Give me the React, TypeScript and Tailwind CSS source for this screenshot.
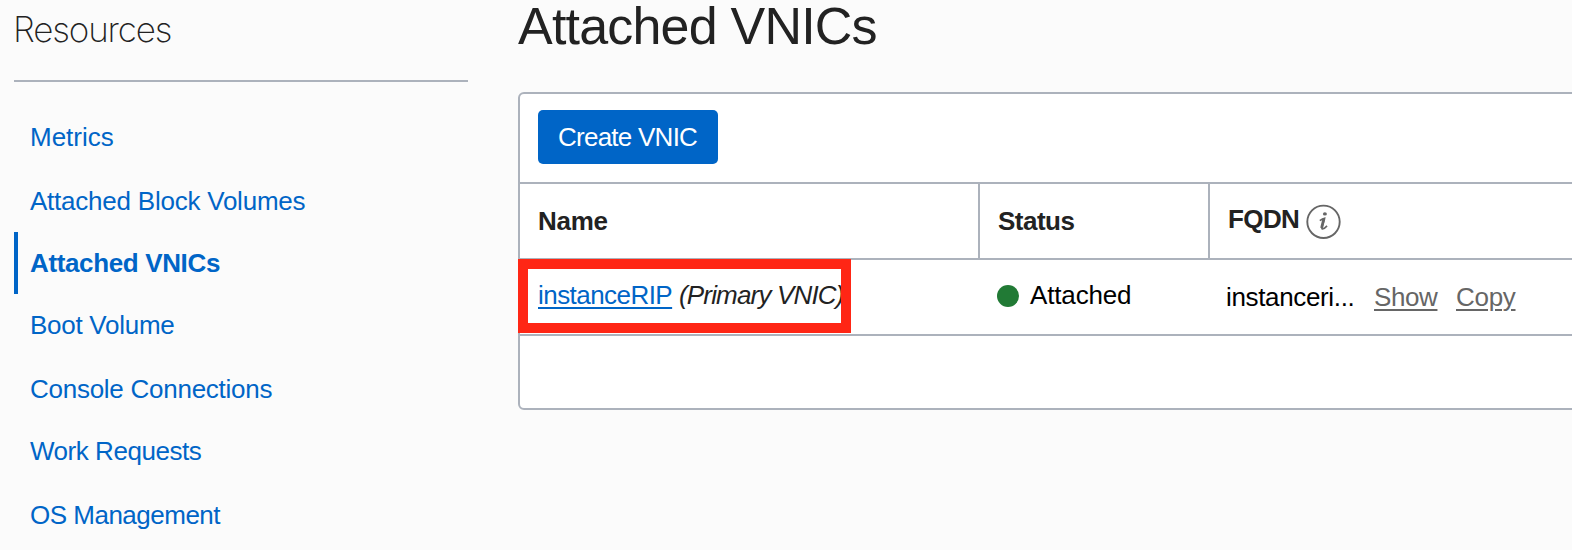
const links = [
  { label: "Metrics", box: "h-16", spacing: "tracking-[0px]" },
  { label: "Attached Block Volumes", box: "h-[62px]", spacing: "tracking-[-0.23px]" },
  { label: "Attached VNICs", box: "h-[62px]", spacing: "tracking-[-0.36px]", active: true },
  { label: "Boot Volume", box: "h-16", spacing: "tracking-[-0.27px]" },
  { label: "Console Connections", box: "h-[62px]", spacing: "tracking-[-0.26px]" },
  { label: "Work Requests", box: "h-16", spacing: "tracking-[-0.46px]" },
  { label: "OS Management", box: "h-16", spacing: "tracking-[-0.5px]" },
];

function Sidebar() {
  return (
    <aside className="w-[454px] shrink-0">
      <h2 className="-ml-px h-20 font-['Inter',sans-serif] text-[35px] leading-[58px] font-extralight tracking-[-1.15px] text-[#222]">
        Resources
      </h2>
      <nav className="border-t-2 border-[#acb2bc] pt-6">
        <ul>
          {links.map((link) => (
            <li key={link.label} className={link.box}>
              <a
                href="#"
                className={`block h-[62px] border-l-4 pl-3 leading-[62px] whitespace-nowrap text-[#0065c7] ${link.spacing} ${
                  link.active ? "border-[#0065c7] font-bold" : "border-transparent"
                }`}
              >
                {link.label}
              </a>
            </li>
          ))}
        </ul>
      </nav>
    </aside>
  );
}

function InfoIcon() {
  return (
    <svg className="ml-[7px] mt-[20px] size-[35px] shrink-0" viewBox="0 0 35 35" fill="none">
      <circle cx="17.5" cy="17.8" r="16.2" stroke="#666" strokeWidth="1.9" />
      <ellipse cx="18.9" cy="9.9" rx="2" ry="1.6" fill="#666" />
      <path
        d="M13.8 16.6 C15.4 15.4 16.7 14.8 18.5 14.4 L15.9 23.4 C15.5 25.6 17.6 25.4 21 21.8"
        stroke="#666"
        strokeWidth="1.7"
      />
      <path d="M17.9 14.6 L15.6 24" stroke="#666" strokeWidth="2.8" />
    </svg>
  );
}

function VnicTable() {
  return (
    <section className="h-[318px] w-[1060px] rounded-md border-2 border-[#acb2bc] bg-white">
      <div className="h-[90px] border-b-2 border-[#acb2bc] pt-4 pl-[18px]">
        <button className="block h-[54px] w-[180px] rounded-[5px] bg-[#0065c7] pl-5 text-left leading-[54px] tracking-[-0.75px] whitespace-nowrap text-white">
          Create VNIC
        </button>
      </div>
      <div className="flex h-[76px] border-b-2 border-[#acb2bc] font-bold text-[#222]">
        <div className="w-[460px] border-r-2 border-[#acb2bc] pl-[18px] leading-[74px] tracking-[-0.25px]">Name</div>
        <div className="w-[230px] border-r-2 border-[#acb2bc] pl-[18px] leading-[74px] tracking-[-0.5px]">Status</div>
        <div className="flex pl-[18px] leading-[70px] tracking-[-0.6px]">
          <span>FQDN</span>
          <InfoIcon />
        </div>
      </div>
      <div className="relative flex h-[76px] border-b-2 border-[#acb2bc] leading-[71px] whitespace-nowrap">
        <div className="flex w-[460px] pl-[18px]">
          <a
            href="#"
            className="w-[141px] tracking-[-0.55px] text-[#0065c7] underline decoration-2 underline-offset-[3px]"
          >
            instanceRIP
          </a>
          <em className="tracking-[-0.83px] text-[#222]">(Primary VNIC)</em>
        </div>
        <div className="flex w-[230px] pl-[17px] text-black">
          <span className="mt-[25px] mr-[11px] size-[22px] rounded-full bg-[#217a35]" />
          <span className="tracking-[-0.15px]">Attached</span>
        </div>
        <div className="flex pl-4 leading-[75px] text-[#666]">
          <span className="w-[148px] tracking-[-0.35px] text-black">instanceri...</span>
          <a href="#" className="w-[82px] tracking-[-0.4px] underline decoration-2 underline-offset-[3px]">
            Show
          </a>
          <a href="#" className="tracking-[-0.3px] underline decoration-2 underline-offset-[3px]">
            Copy
          </a>
        </div>
        <div className="pointer-events-none absolute -top-px -left-0.5 h-[74px] w-[333px] border-[10px] border-[#ff2615]" />
      </div>
    </section>
  );
}

export default function App() {
  return (
    <div className="flex h-[550px] w-full gap-[50px] overflow-hidden bg-[#fbfbfb] pl-3.5 font-['Liberation_Sans',Arial,sans-serif] text-[26px]">
      <Sidebar />
      <main className="shrink-0">
        <h1 className="h-[92px] text-[52px] leading-[52px] tracking-[-0.8px] text-[#222]">Attached VNICs</h1>
        <VnicTable />
      </main>
    </div>
  );
}
